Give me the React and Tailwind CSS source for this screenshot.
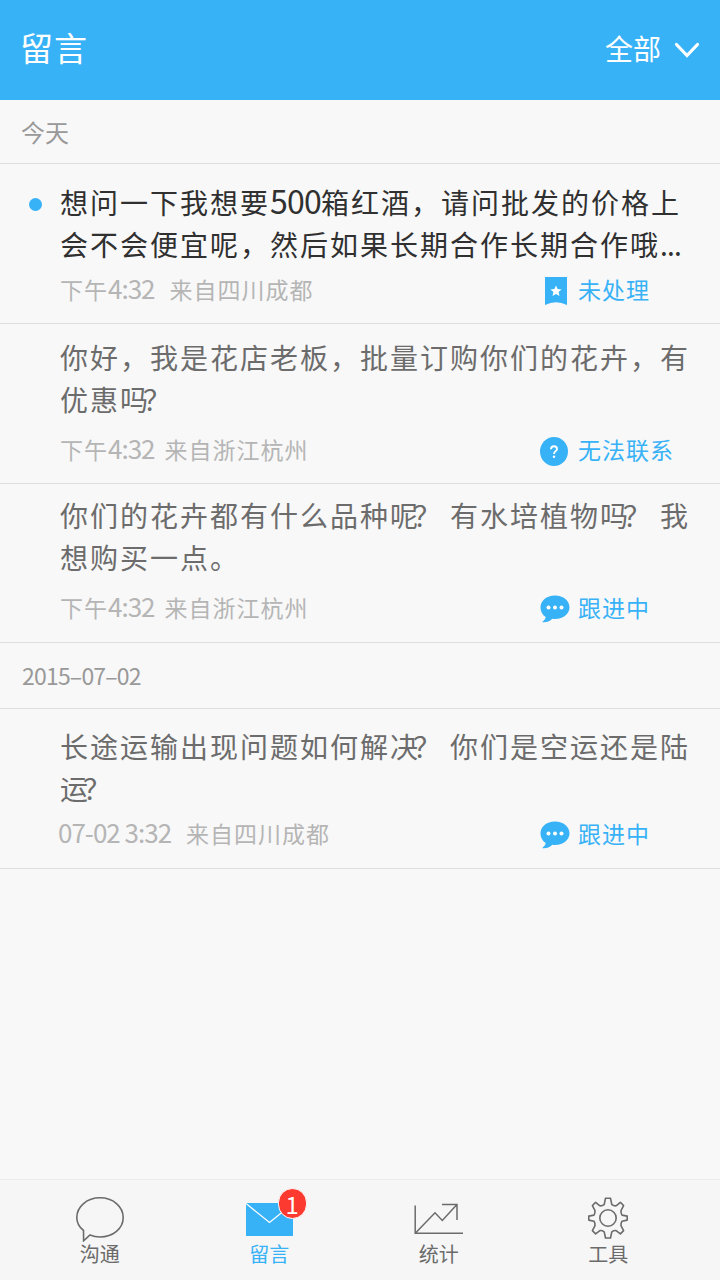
const messages = [
  {
    id: 1,
    unread: true,
    lines: [
      <>想问一下我想要<Num>500</Num>箱红酒，请问批发的价格上</>,
      <>会不会便宜呢，然后如果长期合作长期合作哦<span className="tracking-[-0.8px]">...</span></>,
    ],
    time: <>下午<Time>4:32</Time></>,
    from: '来自四川成都',
    status: 'pending',
    pad: 'pt-[17px]',
    metaGap: 'mt-[8px]',
    fromGap: 'ml-[15px]',
  },
  {
    id: 2,
    lines: [<>你好，我是花店老板，批量订购你们的花卉，有</>, <>优惠吗<Ask /></>],
    time: <>下午<Time>4:32</Time></>,
    from: '来自浙江杭州',
    status: 'unreachable',
    pad: 'pt-[12px]',
    metaGap: 'mt-[13px]',
    fromGap: 'ml-[10px]',
  },
  {
    id: 3,
    lines: [<>你们的花卉都有什么品种呢<Ask />有水培植物吗<Ask />我</>, <>想购买一点。</>],
    time: <>下午<Time>4:32</Time></>,
    from: '来自浙江杭州',
    status: 'following',
    pad: 'pt-[10px]',
    metaGap: 'mt-[13px]',
    fromGap: 'ml-[10px]',
  },
];

const older = [
  {
    id: 4,
    lines: [<>长途运输出现问题如何解决<Ask />你们是空运还是陆</>, <>运<Ask /></>],
    time: <span className="-ml-0.5"><Time>07-02 3:32</Time></span>,
    from: '来自四川成都',
    status: 'following',
    pad: 'pt-[16px]',
    metaGap: 'mt-[8px]',
    fromGap: 'ml-[15px]',
  },
];

const statuses = {
  pending: { label: '未处理', Icon: BookmarkIcon },
  unreachable: { label: '无法联系', Icon: QuestionIcon },
  following: { label: '跟进中', Icon: BubbleIcon },
};

function Num({ children }) {
  return <span className="text-[32px] leading-none tracking-[-0.8px]">{children}</span>;
}

function Time({ children }) {
  return <span className="text-[26px] leading-none tracking-[-1px]">{children}</span>;
}

// question mark hugging the left side of its cell
function Ask() {
  return <span className="relative -left-[7px]">？</span>;
}

function BookmarkIcon() {
  return (
    <svg width="22" height="28" viewBox="0 0 22 28" className="ml-0.5">
      <path d="M0 0H22V28Q11 22.5 0 28Z" fill="#38b2f7" />
      <path d="M11 8.4l1.6 3.7 4 .35-3 2.65.9 3.9-3.5-2.1-3.5 2.1.9-3.9-3-2.65 4-.35z" fill="#fff" />
    </svg>
  );
}

function QuestionIcon() {
  return (
    <svg width="28" height="29" viewBox="0 0 28 29" className="-ml-0.5">
      <ellipse cx="14" cy="14.5" rx="14" ry="14.5" fill="#38b2f7" />
      <path d="M11 12.2c0-2 1.2-2.9 3-2.9s3 1 3 2.6c0 2.2-3 2.3-3 5" fill="none" stroke="#fff" strokeWidth="1.9" />
      <circle cx="14" cy="19.8" r="1.2" fill="#fff" />
    </svg>
  );
}

function BubbleIcon() {
  return (
    <svg width="30" height="28" viewBox="0 0 30 28">
      <path d="M15 .5C23.5.5 29.5 5.7 29.5 12.300S23.500 24 15 24c-1 0-1.700 0-2.600-.2C9.800 26.500 6.500 27.500 3 27.300c-.7-.1-.6-.8 0-1.100 1.700-1 2.500-2.300 2.700-4.100C2.300 19.800.5 16.500.5 12.300.5 5.700 6.500.5 15 .5z" fill="#38b2f7" />
      <circle cx="8.500" cy="12.500" r="2" fill="#fff" />
      <circle cx="15" cy="12.500" r="2" fill="#fff" />
      <circle cx="21.500" cy="12.500" r="2" fill="#fff" />
    </svg>
  );
}

function MessageRow({ message }) {
  const { label, Icon } = statuses[message.status];
  return (
    <li className={`relative border-b border-[#dedede] pl-[60px] ${message.pad} ${message.id === 3 ? 'h-[159px]' : 'h-[160px]'}`}>
      {message.unread && <span className="absolute left-[29px] top-[34px] h-[13px] w-[13px] rounded-full bg-[#38b2f7]" />}
      <div className={`text-[28px] tracking-[2px] ${message.unread ? 'text-[#303030]' : 'text-[#6c6c6c]'}`}>
        {message.lines.map((line, i) => (
          <p key={i} className="h-[42px] whitespace-nowrap leading-[42px]">{line}</p>
        ))}
      </div>
      <div className={`flex h-8 items-center whitespace-nowrap text-[23px] tracking-[1px] ${message.metaGap}`}>
        <div className="flex w-[480px] items-baseline leading-8 text-[#b5b5b5]">
          <span>{message.time}</span>
          <span className={message.fromGap}>{message.from}</span>
        </div>
        <div className="flex items-center gap-2 text-[#38b2f7]">
          <span className="flex w-[30px] justify-center pt-1"><Icon /></span>
          <span>{label}</span>
        </div>
      </div>
    </li>
  );
}

function ChatTab() {
  return (
    <svg width="50" height="46" viewBox="0 0 50 46" fill="none" stroke="#6b6b6b" strokeWidth="1.6">
      <path d="M8.500 34.500C4 31 1.800 26.500 1.800 21.500 1.800 10.500 12 1.800 25 1.800S48.200 10.500 48.200 21.500 38 41 25 41c-3.500 0-7-.7-10-2L8.600 44.800z" />
    </svg>
  );
}

function MailTab() {
  return (
    <span className="relative block h-[33px] w-[47px]">
      <svg width="47" height="33" viewBox="0 0 47 33">
        <path d="M0 0H47V33H0z" fill="#38b2f7" />
        <path d="M0 .5L23.500 19.500 47 .5" fill="none" stroke="#fff" strokeWidth="1.300" />
      </svg>
      <span className="absolute -top-[15px] left-[32px] flex h-[31px] w-[29px] items-center justify-center rounded-full border border-white bg-[#fc3a30] text-[24px] leading-none text-white">
        1
      </span>
    </span>
  );
}

function StatsTab() {
  return (
    <svg width="49" height="32" viewBox="0 0 49 32" fill="none" stroke="#6b6b6b" strokeWidth="1.500">
      <path d="M1.200 2.500V30.300H49M1.500 30L21 9.800l7.300 7.700L42.500 2M28 1.500H43V17" />
    </svg>
  );
}

function ToolsTab() {
  return (
    <svg width="40" height="42" viewBox="0 0 40 42" fill="none" stroke="#6b6b6b" strokeWidth="1.600" strokeLinejoin="round">
      <circle cx="20" cy="21" r="8.200" />
      <path d="M17.500 1.200h5l1.300 6.400q2.300 1.600 4.300 1.200l4.300-3.500 3.200 3.300-2.600 5q-.2 2.600 1 4.500l5.200 1v4l-5.200 1.200q-1.200 1.800-1 4.300l2.600 5-3.200 3.300-4.300-3.300q-2-.4-4.300 1.200l-1.300 6.200h-5l-1.300-6.200q-2.300-1.600-4.300-1.200l-4.300 3.300-3.200-3.300 2.600-5q.2-2.500-1-4.300L.800 23.100v-4l5.200-1q1.200-1.900 1-4.500l-2.600-5 3.200-3.300 4.300 3.500q2 .4 4.300-1.200z" />
    </svg>
  );
}

const tabs = [
  { label: '沟通', Icon: ChatTab, pad: 'pt-[16px]' },
  { label: '留言', Icon: MailTab, pad: 'pt-[23px]', active: true },
  { label: '统计', Icon: StatsTab, pad: 'pt-[23px]' },
  { label: '工具', Icon: ToolsTab, pad: 'pt-[17px]' },
];

export default function App() {
  return (
    <div className="flex h-[1280px] w-[720px] flex-col overflow-hidden bg-[#f8f8f8] font-['Noto_Sans_CJK_SC',sans-serif]">
      <header className="flex h-[100px] shrink-0 items-center justify-between bg-[#38b2f7] pb-1 pl-5 pr-5 text-white">
        <h1 className="text-[33px] tracking-[1px]">留言</h1>
        <button className="flex items-center gap-[13px] text-[28px]">
          全部
          <svg width="26" height="17" viewBox="0 0 26 17" fill="none" stroke="currentColor" strokeWidth="3.200" strokeLinecap="round" className="mt-1">
            <path d="M2.500 2.500L13 13.500 23.500 2.500" />
          </svg>
        </button>
      </header>

      <main className="grow">
        <h2 className="flex h-16 items-center border-b border-[#dedede] pl-[21px] text-[24px] text-[#999]">今天</h2>
        <ul>
          {messages.map(m => <MessageRow key={m.id} message={m} />)}
        </ul>
        <h2 className="flex h-[66px] items-center border-b border-[#dedede] pl-[22px] text-[23px] tracking-[-0.8px] text-[#999]">
          2015–07–02
        </h2>
        <ul>
          {older.map(m => <MessageRow key={m.id} message={m} />)}
        </ul>
      </main>

      <nav className="flex h-[101px] shrink-0 border-t border-[#ebebeb] bg-[#f6f6f6] pl-[15px] pr-[27px]">
        {tabs.map(({ label, Icon, pad, active }) => (
          <a key={label} className="flex flex-1 flex-col items-center">
            <span className={`h-[60px] ${pad}`}><Icon /></span>
            <span className={`text-[20px] leading-[28px] ${active ? 'text-[#38b2f7]' : 'text-[#6b6b6b]'}`}>{label}</span>
          </a>
        ))}
      </nav>
    </div>
  );
}
